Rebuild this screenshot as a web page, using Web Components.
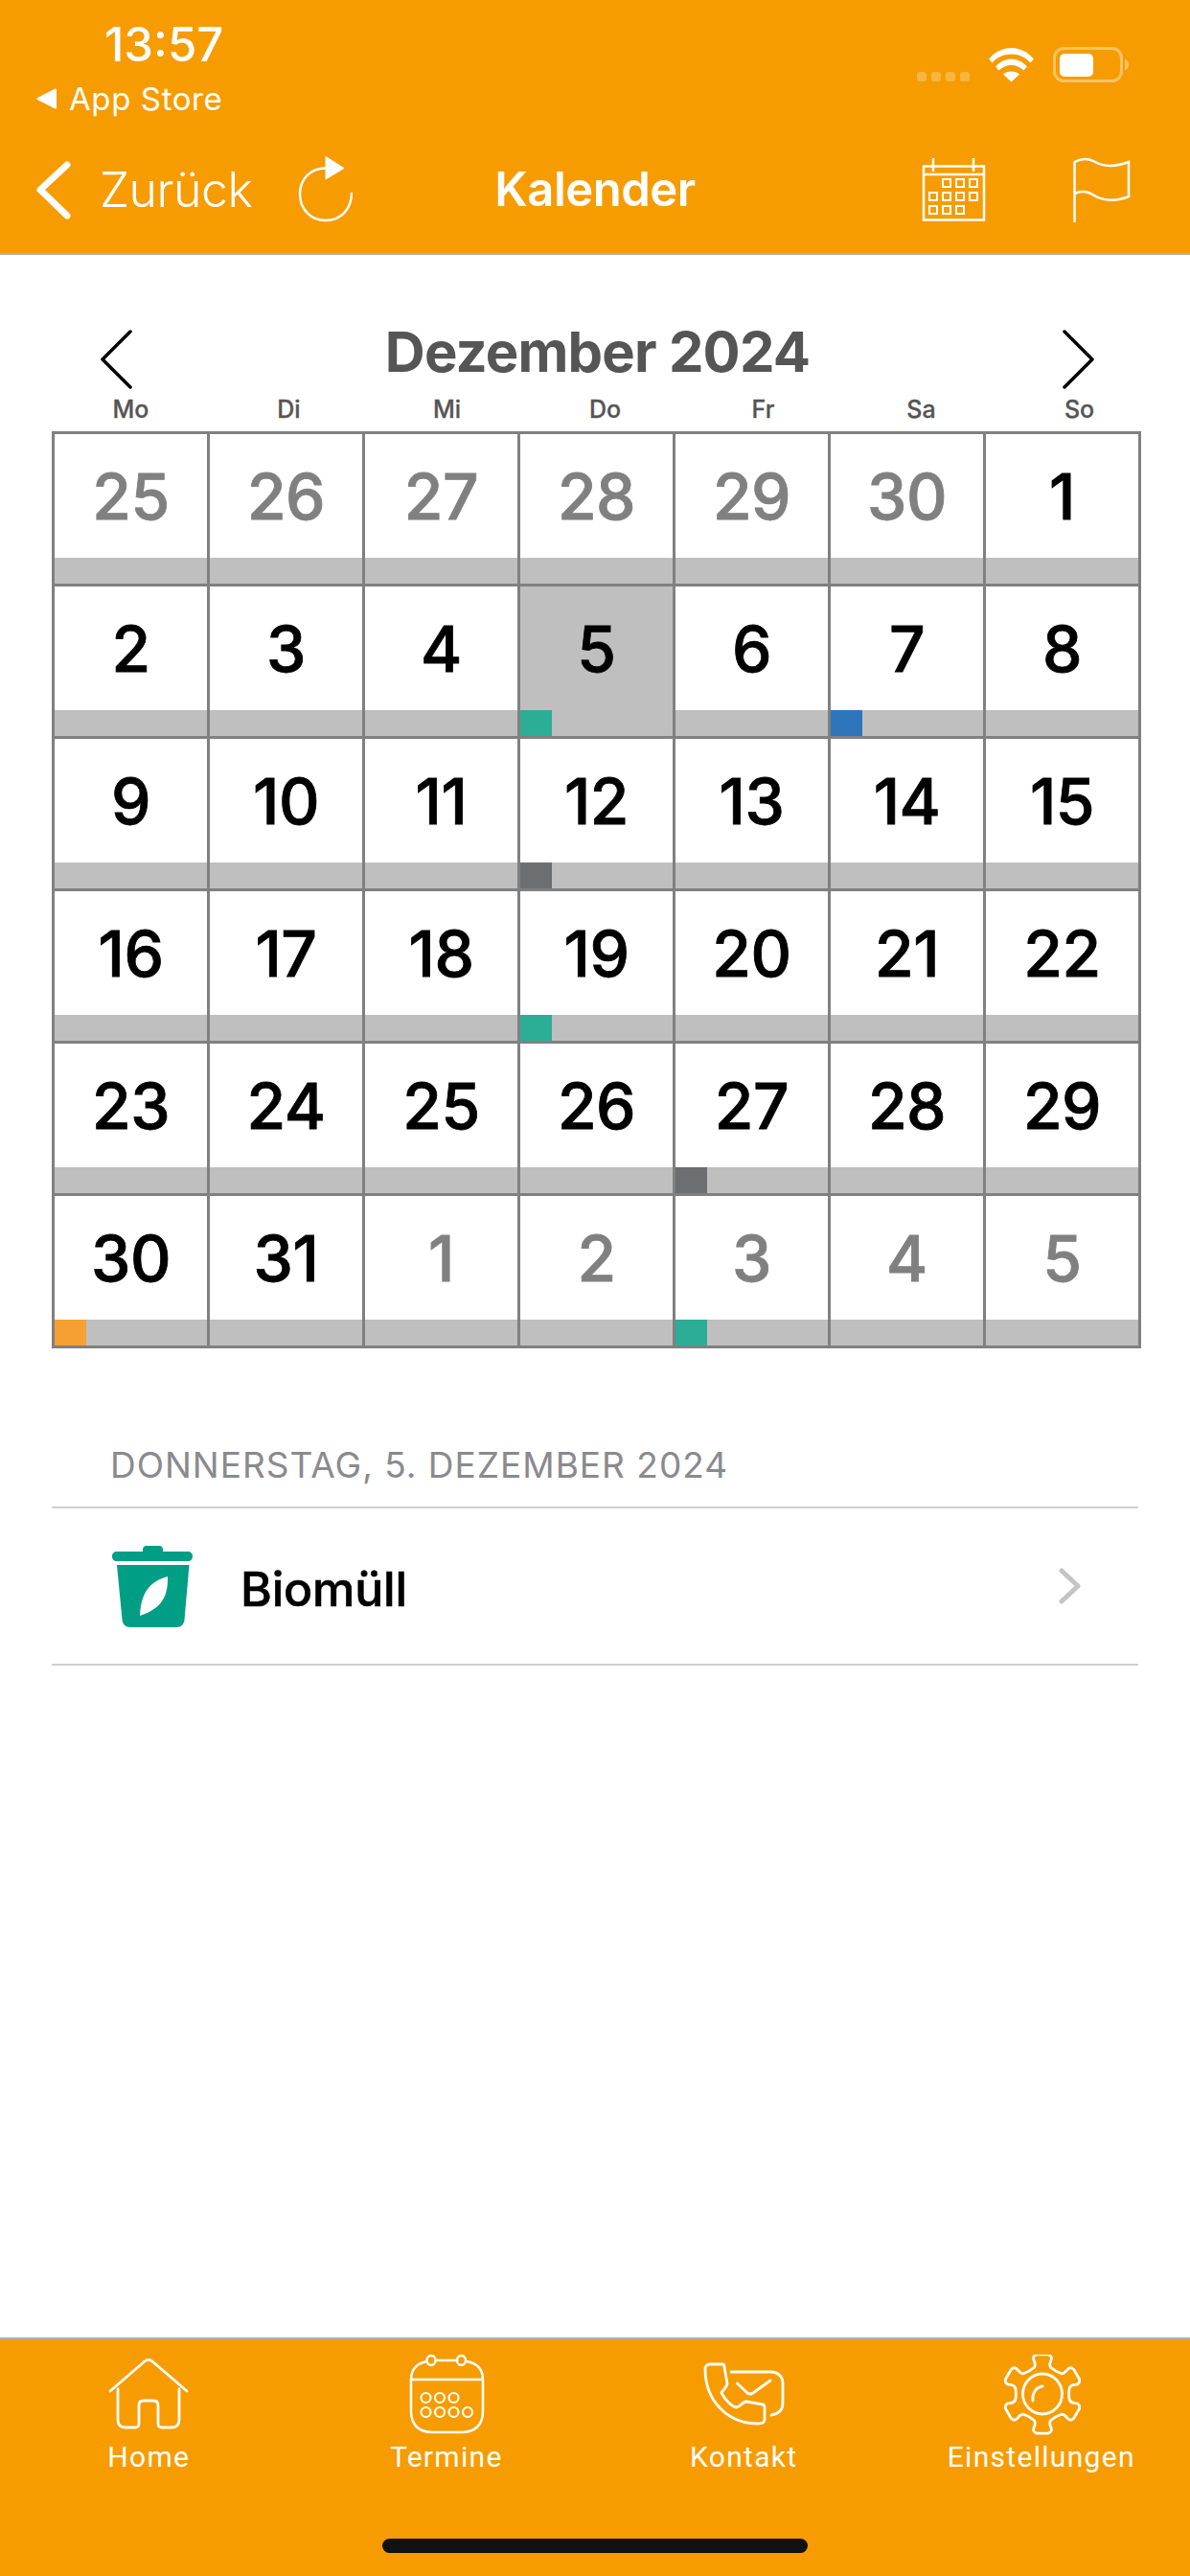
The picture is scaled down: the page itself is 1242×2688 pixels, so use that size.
<!DOCTYPE html>
<html lang="de">
<head>
<meta charset="utf-8">
<title>Kalender</title>
<style>
  html, body { margin: 0; padding: 0; background: #fff; }
  body { font-family: Inter, "Liberation Sans", sans-serif; }
</style>
</head>
<body>

<template id="app-shell">
  <style>
    :host { display: flex; flex-direction: column; width: 1242px; height: 2688px; overflow: hidden; background: #fff; }
    main { flex: 1; display: flex; flex-direction: column; }
  </style>
  <slot name="top"></slot>
  <main><slot></slot></main>
  <slot name="bottom"></slot>
</template>

<template id="status-bar">
  <style>
    :host { display: flex; height: 146px; position: relative; color: #fff; }
    .left { display: flex; flex-direction: column; }
    .time { font: 500 49px/48px Inter, sans-serif; margin: 23px 0 0 109px; }
    .back { display: flex; align-items: center; margin: 12px 0 0 38px; gap: 13px; font: 400 33px/40px Inter, sans-serif; letter-spacing: .6px; }
    .right { margin-left: auto; display: flex; align-items: flex-start; padding: 49px 64px 0 0; }
    svg { display: block; }
  </style>
  <div class="left">
    <div class="time">13:57</div>
    <div class="back">
      <svg width="21" height="22" viewBox="0 0 21 22"><path d="M20 1.5V20.500L1.500 11Z" fill="#fff" stroke="#fff" stroke-width="2" stroke-linejoin="round"/></svg>
      <span>App Store</span>
    </div>
  </div>
  <div class="right">
    <svg width="221" height="37" viewBox="0 0 221 37">
      <g fill="#fff" fill-opacity=".25">
        <rect x="0" y="26" width="10" height="10" rx="3"/>
        <rect x="15" y="26" width="10" height="10" rx="3"/>
        <rect x="30" y="26" width="10" height="10" rx="3"/>
        <rect x="45" y="26" width="10" height="10" rx="3"/>
      </g>
      <g fill="#fff">
        <path d="M75 12.500C87.500 -3 109.500 -3 122 12.500L118.500 16.500C108 4.500 89 4.500 78.500 16.500Z"/>
        <path d="M82 20.500C90.500 10 106.500 10 115 20.500L111.500 24.500C104.500 17 92.500 17 85.500 24.500Z"/>
        <path d="M90 28.500C94.500 24.500 102.500 24.500 107 28.500L98.500 36.500Z"/>
      </g>
      <rect x="143.500" y="1.500" width="70" height="34" rx="10" fill="none" stroke="#fff" stroke-opacity=".4" stroke-width="3"/>
      <rect x="149" y="7" width="35" height="24" rx="5" fill="#fff"/>
      <path d="M217 12.500C220 14 221 16 221 18.500S220 23 217 24.500Z" fill="#fff" fill-opacity=".4"/>
    </svg>
  </div>
</template>

<template id="nav-bar">
  <style>
    :host { display: grid; grid-template-columns: 1fr auto 1fr; align-items: center; height: 118px; box-sizing: border-box; padding-bottom: 14px; color: #fff; }
    .left { display: flex; align-items: center; padding-left: 37px; }
    .label { font: 300 50px/60px Inter, sans-serif; margin-left: 29px; letter-spacing: -.5px; }
    .reload { margin-left: 47px; }
    h1 { margin: 0; font: 600 49px/60px Inter, sans-serif; letter-spacing: -.5px; }
    .right { display: flex; align-items: center; justify-content: flex-end; gap: 90px; padding-right: 62px; }
    svg { display: block; }
  </style>
  <div class="left">
    <svg width="38" height="64" viewBox="0 0 38 64"><path d="M33 6L5 32L33 59" fill="none" stroke="#fff" stroke-width="7" stroke-linecap="round" stroke-linejoin="round"/></svg>
    <span class="label">Zurück</span>
    <svg class="reload" width="62" height="72" viewBox="0 0 62 72">
      <path d="M30 13.500C14 13.500 3 25 3 40.500C3 56 14 68 30 68C46 68 57 56 57 39" fill="none" stroke="#fff" stroke-width="2.500"/>
      <path d="M30 1.500L49 13.500L30 25Z" fill="#fff" stroke="#fff" stroke-linejoin="round"/>
    </svg>
  </div>
  <h1><slot></slot></h1>
  <div class="right">
    <svg width="68" height="68" viewBox="0 0 68 68" fill="none" stroke="#fff" stroke-width="2.500">
      <rect x="2" y="9.500" width="63" height="56"/>
      <path d="M2 18H65M12 1V15M54 1V15"/>
      <g stroke-width="2">
        <rect x="22" y="23" width="8" height="8"/><rect x="36" y="23" width="8" height="8"/><rect x="50" y="23" width="8" height="8"/>
        <rect x="8" y="37" width="8" height="8"/><rect x="22" y="37" width="8" height="8"/><rect x="36" y="37" width="8" height="8"/><rect x="50" y="37" width="8" height="8"/>
        <rect x="8" y="51" width="8" height="8"/><rect x="22" y="51" width="8" height="8"/><rect x="36" y="51" width="8" height="8"/>
      </g>
    </svg>
    <svg width="60" height="68" viewBox="0 0 60 68" fill="none" stroke="#fff" stroke-width="2.500">
      <path d="M1.500 68V5C9 1 15 1 21 4C29 9 42 11 58 5V41C44 47 30 45 22 40C15 35 8 35 1.500 38"/>
    </svg>
  </div>
</template>

<template id="top-bar">
  <style>
    :host { display: block; background: #f79c00; border-bottom: 2px solid #adb0b4; }
  </style>
  <slot></slot>
</template>

<template id="cal-cell">
  <style>
    :host { display: flex; flex-direction: column; height: 156px; background: #fff; color: #000; }
    :host([muted]) { color: #808080; }
    :host([selected]) { background: #bfbfbf; }
    .num { flex: 1; display: flex; align-items: center; justify-content: center; font: 500 66px/1 Inter, sans-serif; -webkit-text-stroke: .8px currentColor; letter-spacing: -.5px; }
    .bar { height: 27px; background: #bfbfbf; }
    .mark { height: 100%; width: 33px; background: var(--mark, transparent); }
  </style>
  <div class="num"><slot></slot></div>
  <div class="bar"><div class="mark"></div></div>
</template>

<template id="cal-month">
  <style>
    :host { display: block; padding-top: 74px; }
    .head { display: flex; align-items: center; justify-content: space-between; height: 70px; padding: 0 100px 0 105px; }
    .title { font: 700 58px/70px Inter, sans-serif; color: #555; letter-spacing: -.8px; padding-bottom: 16px; }
    .week { display: grid; grid-template-columns: repeat(7, 165px); margin-left: 54px; height: 34px; margin-bottom: 6px; }
    .week span { text-align: center; font: 500 25px/34px Inter, sans-serif; -webkit-text-stroke: .3px currentColor; color: #555; }
    .grid { display: grid; grid-template-columns: repeat(7, 159px); gap: 3px; padding: 3px; margin-left: 54px; width: max-content; background: #808080; }
    svg { display: block; }
  </style>
  <div class="head">
    <svg width="34" height="62" viewBox="0 0 34 62"><path d="M31 2L2 31L31 60" fill="none" stroke="#000" stroke-width="3.500" stroke-linecap="round" stroke-linejoin="round"/></svg>
    <div class="title">Dezember 2024</div>
    <svg width="34" height="62" viewBox="0 0 34 62"><path d="M3 2L32 31L3 60" fill="none" stroke="#000" stroke-width="3.500" stroke-linecap="round" stroke-linejoin="round"/></svg>
  </div>
  <div class="week"></div>
  <div class="grid"></div>
</template>

<template id="day-list">
  <style>
    :host { display: block; margin-top: 99px; }
    .head { font: 400 37px/46px Inter, sans-serif; letter-spacing: 1px; color: #8a8a8e; padding: 0 0 20px 61px; margin: 0 54px; border-bottom: 2px solid #cfcfd2; }
  </style>
  <div class="head"><slot name="title"></slot></div>
  <slot></slot>
</template>

<template id="day-row">
  <style>
    :host { display: flex; align-items: center; height: 162px; margin: 0 54px; padding-left: 63px; border-bottom: 2px solid #cfcfd2; }
    .label { flex: 1; margin: 6px 0 0 50px; font: 500 50px/60px Inter, sans-serif; -webkit-text-stroke: .6px currentColor; color: #000; letter-spacing: -.2px; }
    .chev { margin-right: 59px; }
    svg { display: block; }
  </style>
  <svg width="84" height="85" viewBox="0 0 84 85">
    <path d="M32 6V4C32 2 33 0 36 0H49C52 0 53 2 53 4V6H79C82 6 84 8 84 11C84 14 82 16 79 16H5C2 16 0 14 0 11C0 8 2 6 5 6Z" fill="#009e85"/>
    <path d="M5 20H80.500L75.500 77C75 82 72 85 67 85H19C14 85 11 82 10.500 77Z" fill="#009e85"/>
    <path d="M58 32C40 37 30 48 29 73C47 67 59 57 58 32Z" fill="#fff"/>
  </svg>
  <div class="label"><slot></slot></div>
  <svg class="chev" width="24" height="38" viewBox="0 0 24 38"><path d="M3 3L20 19L3 35" fill="none" stroke="#c4c4c7" stroke-width="5" stroke-linecap="round" stroke-linejoin="round"/></svg>
</template>

<template id="tab-bar">
  <style>
    :host { display: flex; flex-direction: column; height: 249px; box-sizing: border-box; background: #f79c00; border-top: 2px solid #adb0b4; }
    .tabs { display: grid; grid-template-columns: repeat(4, 1fr); padding-top: 16px; }
    .home { width: 444px; height: 15px; border-radius: 8px; background: #121212; margin: auto auto 24px; }
  </style>
  <div class="tabs"><slot></slot></div>
  <div class="home"></div>
</template>

<template id="tab-item">
  <style>
    :host { display: flex; flex-direction: column; align-items: center; color: #fff; }
    .icon { height: 90px; }
    .text { font: 400 30px/36px Roboto, sans-serif; letter-spacing: 1.300px; margin-top: -1px; }
  </style>
  <div class="icon"><slot name="icon"></slot></div>
  <div class="text"><slot></slot></div>
</template>

<app-shell>
  <top-bar slot="top">
    <status-bar></status-bar>
    <nav-bar>Kalender</nav-bar>
  </top-bar>

  <cal-month></cal-month>

  <day-list>
    <span slot="title">DONNERSTAG, 5. DEZEMBER 2024</span>
    <day-row>Biomüll</day-row>
  </day-list>

  <tab-bar slot="bottom">
    <tab-item>
      <svg slot="icon" width="90" height="90" viewBox="0 0 90 90" fill="none" stroke="#fff" stroke-width="2.800" stroke-linecap="round" stroke-linejoin="round">
        <path d="M5 38L41 7Q45 4 49 7L85 38"/>
        <path d="M13 36V68Q13 76 21 76H31Q35 76 35 72V53Q35 48 40 48H50Q55 48 55 53V72Q55 76 59 76H69Q77 76 77 68V36"/>
      </svg>
      Home
    </tab-item>
    <tab-item>
      <svg slot="icon" width="90" height="90" viewBox="0 0 90 90" fill="none" stroke="#fff" stroke-width="2.500">
        <path d="M25 7C14 9 8 15 8 26V59C8 73 16 81 30 81H61C75 81 83 73 83 59V26C83 15 77 9 66 7M34 6H56M8 26H83"/>
        <ellipse cx="29" cy="6" rx="4.500" ry="5"/><ellipse cx="60.500" cy="6" rx="4.500" ry="5"/>
        <g stroke-width="2.200">
          <circle cx="23.500" cy="45" r="5"/><circle cx="38" cy="45" r="5"/><circle cx="52.500" cy="45" r="5"/>
          <circle cx="23.500" cy="60" r="5"/><circle cx="38" cy="60" r="5"/><circle cx="52.500" cy="60" r="5"/><circle cx="67" cy="60" r="5"/>
        </g>
      </svg>
      Termine
    </tab-item>
    <tab-item>
      <svg slot="icon" width="90" height="90" viewBox="0 0 90 90" fill="none" stroke="#fff" stroke-width="2.800" stroke-linecap="round" stroke-linejoin="round">
        <path d="M5 15C5 12 7 10 10 10H23C25 10 25 12 25 13L28 30C28 34 23 37 22 40C25 46 33 55 38 55C42 54 44 49 48 49L65 52C67 52 67 54 67 56V68C67 71 64 72 60 72C27 72 5 47 5 15Z"/>
        <path d="M32 18H73C81 18 86 23 86 30V50C86 58 82 62 74 63"/>
        <path d="M38.500 30L49 40Q52 42 55 40L73 27"/>
      </svg>
      Kontakt
    </tab-item>
    <tab-item>
      <gear-icon slot="icon"></gear-icon>
      Einstellungen
    </tab-item>
  </tab-bar>
</app-shell>

<script>
  // small helper, all the elements below only differ in their template
  function simple(tag) {
    customElements.define(tag, class extends HTMLElement {
      constructor() {
        super();
        this.attachShadow({ mode: 'open' }).appendChild(document.getElementById(tag).content.cloneNode(true));
      }
    });
  }
  ['app-shell', 'status-bar', 'nav-bar', 'top-bar', 'cal-cell', 'day-list', 'day-row', 'tab-bar', 'tab-item'].forEach(simple);

  const MARKS = { teal: '#2cae96', blue: '#2e75bb', grey: '#6d6e71', orange: '#f6a033' };

  class CalMonth extends HTMLElement {
    constructor() {
      super();
      this.attachShadow({ mode: 'open' }).appendChild(document.getElementById('cal-month').content.cloneNode(true));
    }

    connectedCallback() {
      const week = this.shadowRoot.querySelector('.week');
      for (const name of ['Mo', 'Di', 'Mi', 'Do', 'Fr', 'Sa', 'So']) {
        const span = document.createElement('span');
        span.textContent = name;
        week.appendChild(span);
      }

      const days = [];
      for (let d = 25; d <= 30; d++) days.push({ n: d, muted: true });
      for (let d = 1; d <= 31; d++) days.push({ n: d });
      for (let d = 1; d <= 5; d++) days.push({ n: d, muted: true, next: true });

      const marks = { 5: 'teal', 7: 'blue', 12: 'grey', 19: 'teal', 27: 'grey', 30: 'orange' };
      const grid = this.shadowRoot.querySelector('.grid');
      for (const day of days) {
        const cell = document.createElement('cal-cell');
        cell.textContent = day.n;
        if (day.muted) cell.setAttribute('muted', '');
        if (!day.muted && day.n === 5) cell.setAttribute('selected', '');
        if (!day.muted && marks[day.n]) cell.style.setProperty('--mark', MARKS[marks[day.n]]);
        if (day.next && day.n === 3) cell.style.setProperty('--mark', MARKS.teal);
        grid.appendChild(cell);
      }
    }
  }
  customElements.define('cal-month', CalMonth);

  class GearIcon extends HTMLElement {
    constructor() {
      super();
      this.attachShadow({ mode: 'open' }).innerHTML = `
        <style>:host { display: block; width: 90px; height: 90px; } svg { display: block; }</style>
        <svg width="90" height="90" viewBox="0 0 90 90" fill="none" stroke="#fff" stroke-width="2.800" stroke-linecap="round" stroke-linejoin="round">
          <path d="${this.outline()}"/>
          <ellipse cx="46" cy="41" rx="20.500" ry="21"/>
          <path d="M36 48C35 41 39 34 46 33"/>
        </svg>`;
    }

    // six teeth, one straight up
    outline() {
      const pt = (r, deg) => {
        const a = deg * Math.PI / 180;
        return (46 + r * Math.cos(a)).toFixed(1) + ' ' + (41 + r * Math.sin(a)).toFixed(1);
      };
      let d = '';
      for (let i = 0; i < 6; i++) {
        const a = -90 + i * 60;
        d += (i ? 'Q' + pt(27, a - 30) + ' ' : 'M') + pt(29, a - 17);
        d += 'Q' + pt(31, a - 13) + ' ' + pt(35, a - 14);
        d += 'Q' + pt(41, a - 16) + ' ' + pt(41.500, a - 8);
        d += 'L' + pt(41.500, a + 8);
        d += 'Q' + pt(41, a + 16) + ' ' + pt(35, a + 14);
        d += 'Q' + pt(31, a + 13) + ' ' + pt(29, a + 17);
      }
      return d + 'Q' + pt(27, -120) + ' ' + pt(29, -107) + 'Z';
    }
  }
  customElements.define('gear-icon', GearIcon);
</script>
</body>
</html>
